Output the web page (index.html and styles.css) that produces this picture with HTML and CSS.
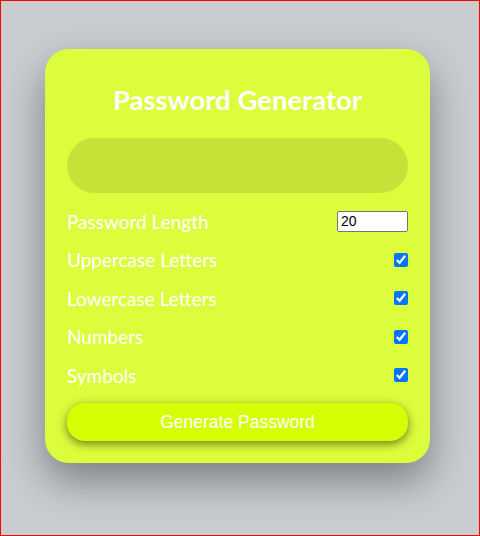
FILE: index.html
```html
<!DOCTYPE html>
<html>
<head>
<meta charset="utf-8">
<link rel="stylesheet" href="styles.css">
</head>
<body>
<div class="card">
  <h2 class="title">Password Generator</h2>
  <div class="result"></div>
  <div class="settings">
    <div class="setting"><label>Password Length</label><input type="number" class="len" value="20"></div>
    <div class="setting"><label>Uppercase Letters</label><input type="checkbox" checked></div>
    <div class="setting"><label>Lowercase Letters</label><input type="checkbox" checked></div>
    <div class="setting"><label>Numbers</label><input type="checkbox" checked></div>
    <div class="setting"><label>Symbols</label><input type="checkbox" checked></div>
  </div>
  <button class="btn">Generate Password</button>
</div>
</body>
</html>
```
FILE: styles.css
```css
html, body { margin: 0; padding: 0; }
body {
  box-sizing: border-box;
  width: 480px;
  height: 536px;
  border: 1px solid #ff0000;
  background: #c9cdd0;
  font-family: Lato, "Noto Sans", sans-serif;
  display: flex;
  justify-content: center;
  align-items: flex-start;
  padding-top: 48px;
  padding-right: 5px;
}
.card {
  width: 385px;
  box-sizing: border-box;
  background: #dcfd3c;
  border-radius: 24px;
  padding: 22px;
  box-shadow: 0 18px 40px rgba(0,0,0,0.38);
  display: flex;
  flex-direction: column;
}
.title {
  margin: 13px 0 22px;
  line-height: 32px;
  font-size: 27.5px;
  font-weight: 700;
  color: #ffffff;
  text-align: center;
}
.result {
  height: 55px;
  border-radius: 28px;
  background: #c6e239;
}
.settings {
  display: flex;
  flex-direction: column;
  gap: 14.5px;
  margin: 16px 0 16px;
}
.setting {
  height: 24px;
  display: flex;
  justify-content: space-between;
  align-items: center;
  color: #ffffff;
  font-size: 19px;
}
.len {
  width: 71px;
  height: 21px;
  box-sizing: border-box;
  margin: 0;
  font-size: 14px;
  font-family: "Liberation Sans", Arial, sans-serif;
  padding: 1px 2px;
}
input[type=checkbox] { margin: 0; width: 14px; height: 14px; }
.btn {
  height: 38px;
  border: none;
  border-radius: 18px;
  background: #d4ff05;
  color: #ffffff;
  font-family: "Liberation Sans", Arial, sans-serif;
  font-size: 17.5px;
  box-shadow: 0 3px 10px rgba(0,0,0,0.5);
}
```
